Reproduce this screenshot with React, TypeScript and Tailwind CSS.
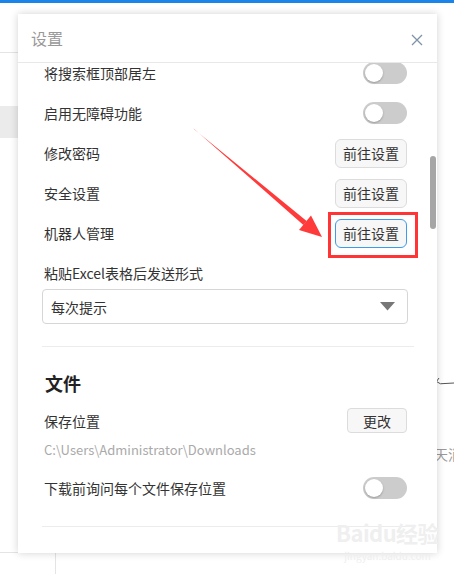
import React from 'react'

const font = "font-['Microsoft_YaHei','Noto_Sans_CJK_SC',sans-serif]"

function Toggle() {
  return (
    <div className="w-[44px] h-[22px] rounded-full bg-[#cccccc] relative flex-shrink-0">
      <div className="absolute left-[2px] top-[2px] w-[18px] h-[18px] rounded-full bg-white shadow-[0_1px_2px_rgba(0,0,0,0.25)]" />
    </div>
  )
}

function GoButton({ active }: { active?: boolean }) {
  return (
    <button
      className={
        active
          ? 'h-[29px] w-[72px] rounded-[6px] border border-[#3d9be9] bg-[#f7f7f7] text-[14px] leading-none text-[#333]'
          : 'h-[29px] w-[72px] rounded-[6px] border border-[#dcdcdc] bg-[#f7f7f7] text-[14px] leading-none text-[#333]'
      }
    >
      前往设置
    </button>
  )
}

function Row({ label, children }: { label: string; children: React.ReactNode }) {
  return (
    <div className="h-[40px] flex items-center justify-between">
      <span className="ml-[2px] text-[14px] text-[#333] leading-none">{label}</span>
      {children}
    </div>
  )
}

export default function App() {
  return (
    <div className={`w-[454px] h-[574px] relative overflow-hidden bg-white ${font}`}>
      <div className="h-[3px] bg-[#1a84ea]" />

      {/* page behind the dialog */}
      <div className="absolute left-0 top-[52px] w-[20px] h-px bg-[#e4e4e4]" />
      <div className="absolute left-0 top-[106px] w-[20px] h-[32px] bg-[#ebebeb]" />
      <div className="absolute left-0 top-[552px] w-[20px] h-px bg-[#e4e4e4]" />
      <div className="absolute left-[55px] top-[553px] w-px h-[21px] bg-[#e4e4e4]" />
      <svg className="absolute left-[436px] top-[372px]" width="18" height="16" viewBox="0 0 18 16">
        <path d="M3 6 L0.5 9.5 Q4 13 9 11.5 L18 11" fill="none" stroke="#555" strokeWidth="1" />
      </svg>
      <div className="absolute left-[434px] top-[447px] text-[14px] leading-none text-[#9a9a9a] whitespace-nowrap">天消</div>

      {/* dialog */}
      <div className="absolute left-[18px] top-[14px] w-[419px] h-[539px] bg-white shadow-[0_0_8px_rgba(0,0,0,0.18)] flex flex-col overflow-hidden">
        <div className="h-[49px] flex-shrink-0 flex items-center justify-between pl-[13px] pr-[14px] border-b border-[#e8e8e8]">
          <span className="text-[16px] text-[#999] leading-none">设置</span>
          <svg width="12" height="12" viewBox="0 0 12 12" className="mt-[4px]">
            <path d="M1 1 L11 11 M11 1 L1 11" stroke="#7e93aa" strokeWidth="1.3" />
          </svg>
        </div>

        <div className="flex-1 relative overflow-hidden">
          <div className="pl-[24px] pr-[30px] -mt-[10px]">
            <Row label="将搜索框顶部居左"><Toggle /></Row>
            <Row label="启用无障碍功能"><Toggle /></Row>
            <Row label="修改密码"><GoButton /></Row>
            <Row label="安全设置"><GoButton /></Row>
            <Row label="机器人管理"><GoButton active /></Row>

            <div className="mt-[10px] ml-[2px] text-[14px] leading-[20px] text-[#333]">粘贴Excel表格后发送形式</div>
            <div className="mt-[6px] -mr-[1px] h-[35px] rounded-[4px] border border-[#d6d6d6] flex items-center justify-between pl-[8px] pr-[12px]">
              <span className="text-[14px] leading-none text-[#333]">每次提示</span>
              <svg width="15" height="9" viewBox="0 0 15 9">
                <path d="M0 0 L15 0 L7.5 8.5 Z" fill="#777" />
              </svg>
            </div>

            <div className="mt-[22px] h-px bg-[#ececec] -mr-[7px]" />

            <div className="mt-[25px] ml-[3px] text-[18px] font-bold leading-[22px] text-[#222]">文件</div>

            <div className="mt-[14px] h-[25px] flex items-center justify-between">
              <span className="ml-[2px] text-[14px] leading-none text-[#333]">保存位置</span>
              <button className="h-[25px] w-[60px] rounded-[4px] border border-[#dcdcdc] bg-[#f7f7f7] text-[14px] leading-none text-[#333]">更改</button>
            </div>
            <div className="mt-[8px] ml-[2px] text-[13px] leading-[18px] text-[#aaa]">{'C:\\Users\\Administrator\\Downloads'}</div>

            <div className="mt-[9px] h-[40px] flex items-center justify-between">
              <span className="ml-[2px] text-[14px] leading-none text-[#333]">下载前询问每个文件保存位置</span>
              <Toggle />
            </div>

            <div className="mt-[18px] h-px bg-[#ececec] -mr-[7px]" />
          </div>

          <div className="absolute left-[412px] top-[93px] w-[6px] h-[73px] rounded-full bg-[#a6a6a6]" />
        </div>
      </div>

      {/* watermark */}
      <div className="absolute left-[336px] top-[521px] flex flex-col items-center text-[#efefef] leading-none pointer-events-none">
        <span className="text-[22px] font-bold tracking-tight">Baidu经验</span>
        <span className="text-[10px] mt-[8px]">jingyan.baidu.com</span>
      </div>

      {/* annotation */}
      <svg className="absolute left-0 top-0 pointer-events-none" width="454" height="574" viewBox="0 0 454 574">
        <polygon points="193.6,128.6 194.4,129.4 306.6,221.1 303.4,224.9" fill="#ff3a3a" />
        <polygon points="322,237 299,230 311,215.5" fill="#ff3a3a" />
      </svg>
      <div className="absolute left-[328px] top-[212px] w-[90px] h-[46px] border-[3px] border-[#ff3535]" />
    </div>
  )
}
